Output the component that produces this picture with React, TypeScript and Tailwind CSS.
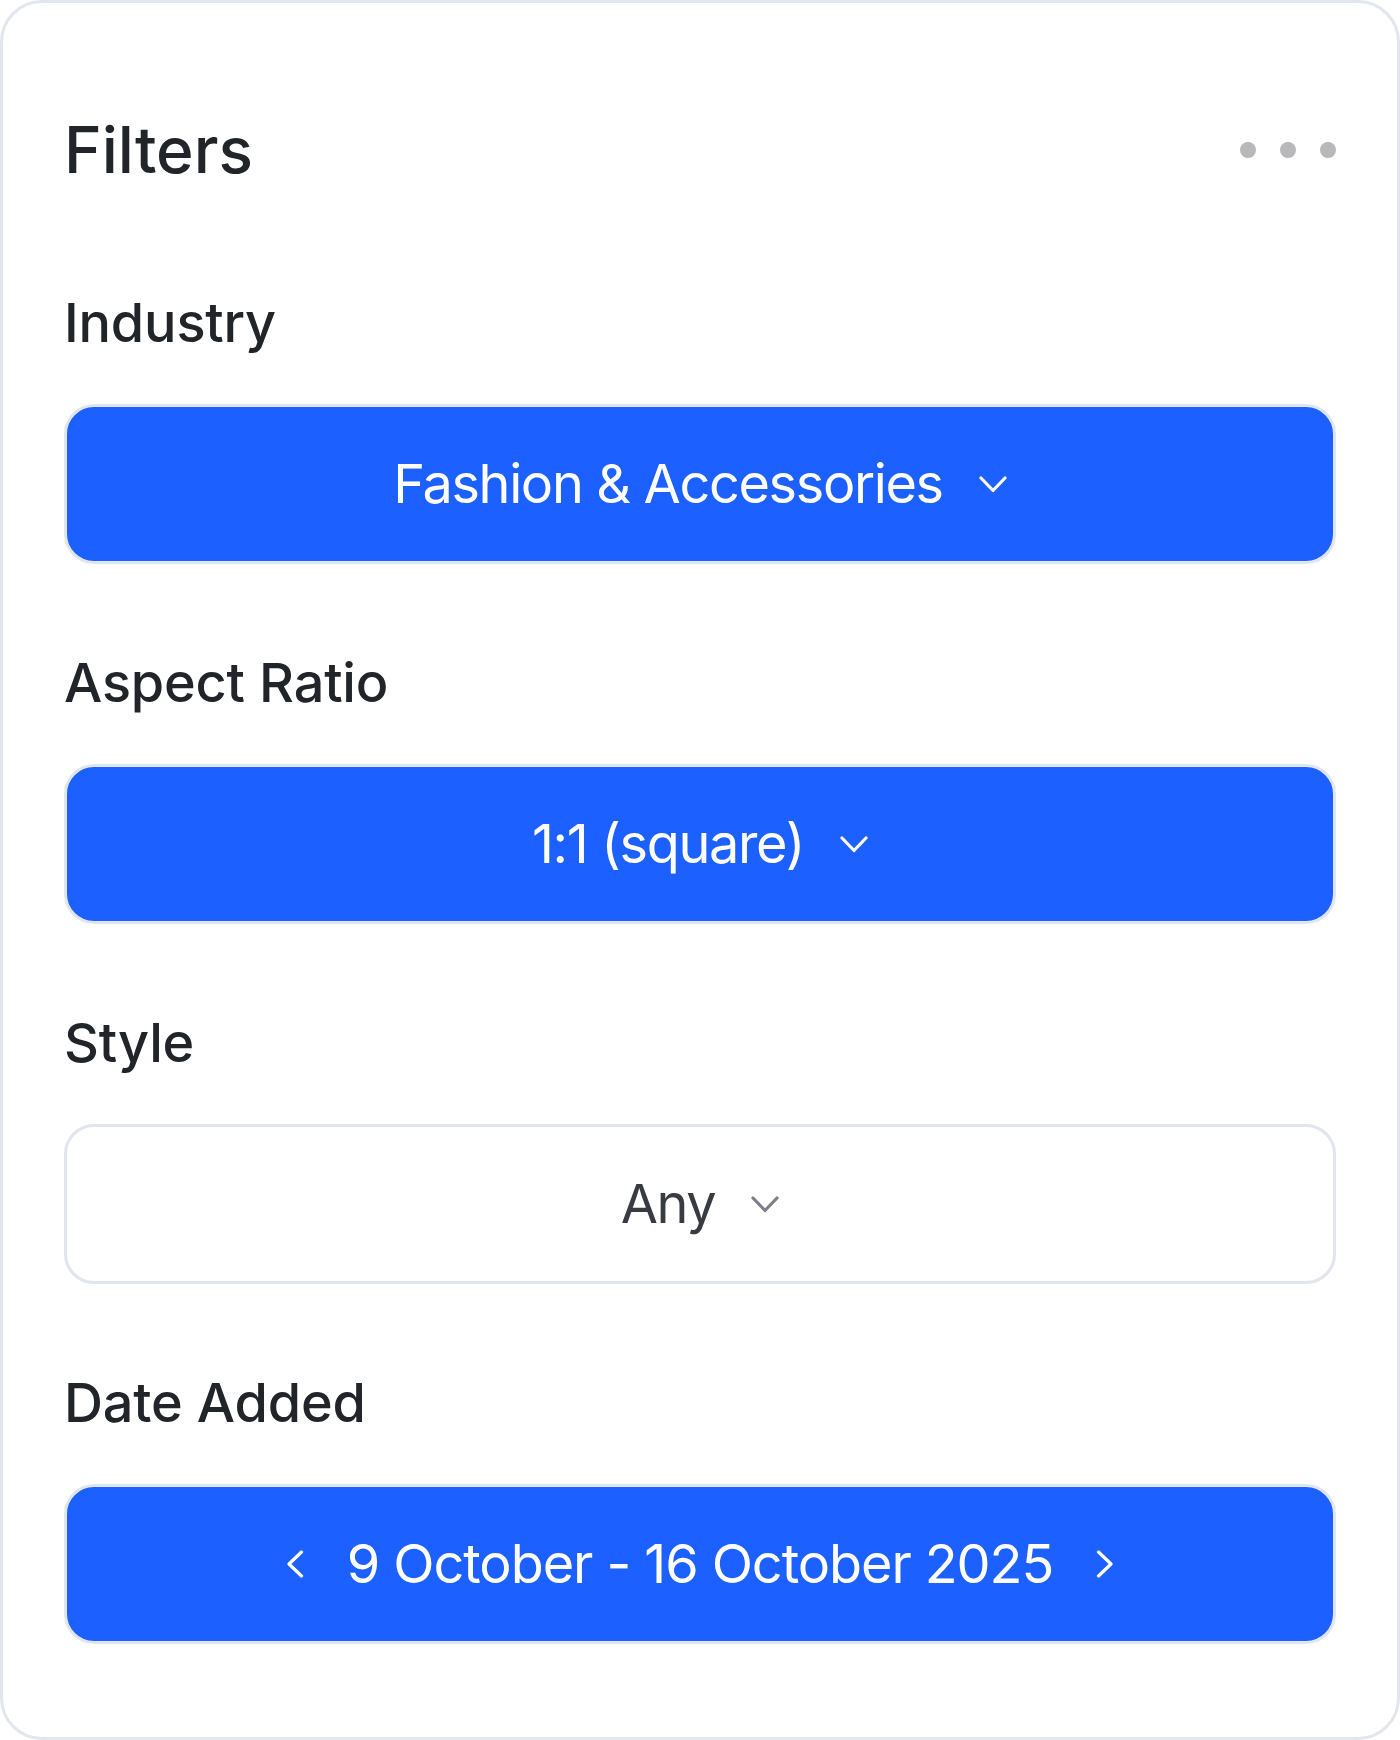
import React from "react";

const font = { fontFamily: "Inter, 'Noto Sans', sans-serif" };

function ChevronDown({ color }: { color: string }) {
  return (
    <svg width="28" height="17" viewBox="0 0 28 17" fill="none" className="shrink-0">
      <polyline
        points="2,2 14,14.5 26,2"
        stroke={color}
        strokeWidth="3.2"
        strokeLinecap="round"
        strokeLinejoin="round"
      />
    </svg>
  );
}

function ChevronSide({ dir }: { dir: "left" | "right" }) {
  return (
    <svg width="17" height="28" viewBox="0 0 17 28" fill="none" className="shrink-0">
      <polyline
        points={dir === "left" ? "14.5,2 2,14 14.5,26" : "2.5,2 15,14 2.5,26"}
        stroke="#ffffff"
        strokeWidth="3.2"
        strokeLinecap="round"
        strokeLinejoin="round"
      />
    </svg>
  );
}

function Label({ children }: { children: React.ReactNode }) {
  return (
    <div className="h-[54px] text-[54px] leading-[54px] font-medium tracking-[-0.003em] text-[#212429] whitespace-nowrap">
      {children}
    </div>
  );
}

function BlueSelect({ text }: { text: string }) {
  return (
    <div className="h-[160px] w-full rounded-[30px] border-[3px] border-[#e1e5ee] bg-[#1c60ff] flex items-center justify-center gap-[36px]">
      <span className="text-[54px] leading-[54px] tracking-[-0.025em] text-white whitespace-nowrap">{text}</span>
      <ChevronDown color="#ffffff" />
    </div>
  );
}

export default function App() {
  return (
    <div className="w-[1400px] bg-white" style={font}>
      <div className="h-[1740px] w-[1400px] rounded-[42px] border-[3px] border-[#e2e6ef] bg-white pt-[115px] pb-[93px] px-[61px] flex flex-col">
        <div className="h-[64px] flex items-center justify-between">
          <h1 className="text-[64px] leading-[64px] font-medium tracking-[0em] text-[#212429]">Filters</h1>
          <div className="flex items-center gap-[24px]">
            <span className="block w-[16px] h-[16px] rounded-full bg-[#b8b8bb]" />
            <span className="block w-[16px] h-[16px] rounded-full bg-[#b8b8bb]" />
            <span className="block w-[16px] h-[16px] rounded-full bg-[#b8b8bb]" />
          </div>
        </div>

        <div className="mt-[114px] flex flex-col gap-[92px]">
          <section className="flex flex-col gap-[54px]">
            <Label>Industry</Label>
            <BlueSelect text="Fashion & Accessories" />
          </section>

          <section className="flex flex-col gap-[54px]">
            <Label>Aspect Ratio</Label>
            <BlueSelect text="1:1 (square)" />
          </section>

          <section className="flex flex-col gap-[54px]">
            <Label>Style</Label>
            <div className="h-[160px] w-full rounded-[30px] border-[3px] border-[#e1e5ee] bg-white flex items-center justify-center gap-[36px]">
              <span className="text-[54px] leading-[54px] tracking-[-0.025em] text-[#393b43] whitespace-nowrap">Any</span>
              <ChevronDown color="#7d7e87" />
            </div>
          </section>

          <section className="flex flex-col gap-[54px]">
            <Label>Date Added</Label>
            <div className="h-[160px] w-full rounded-[30px] border-[3px] border-[#e1e5ee] bg-[#1c60ff] flex items-center justify-center gap-[43px]">
              <ChevronSide dir="left" />
              <span className="text-[54px] leading-[54px] tracking-[-0.02em] text-white whitespace-nowrap">
                9 October - 16 October 2025
              </span>
              <ChevronSide dir="right" />
            </div>
          </section>
        </div>
      </div>
    </div>
  );
}
